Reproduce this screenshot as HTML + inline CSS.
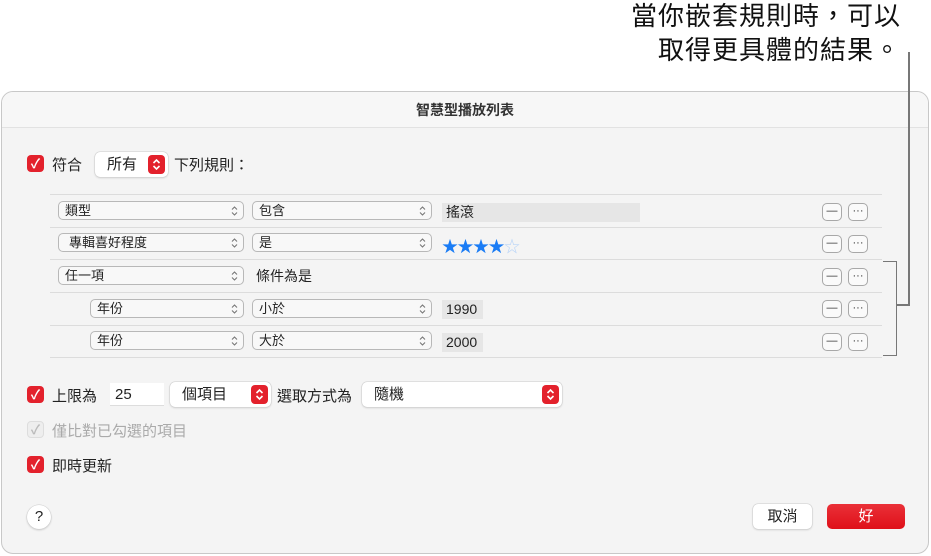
<!DOCTYPE html><html><head><meta charset="utf-8"><style>
*{box-sizing:border-box;margin:0;padding:0}
body{width:931px;height:556px;background:#fff;position:relative;overflow:hidden;font-family:"Liberation Sans","Noto Sans CJK TC",sans-serif;color:#222;font-size:14px}
.a{position:absolute}
.dlg{left:1px;top:91px;width:928px;height:463px;border:1px solid #c8c8c8;border-radius:12px;background:#f4f4f4;overflow:hidden}
.tb{left:0;top:0;width:100%;height:36px;background:#f7f7f7;border-bottom:1px solid #e2e2e2;text-align:center;line-height:36px;font-size:14px;font-weight:bold;color:#333}
.cb{width:17px;height:17px;border-radius:4px;background:#e3212c;color:#fff;font-size:13px;line-height:17px;text-align:center;font-weight:bold}
.pop{height:19px;border:1px solid #b8b8b8;border-radius:5px;background:#f8f8f8;font-size:13px;line-height:17px;padding-left:6px}
.ar{position:absolute;right:5px;top:3px;width:7px;height:12px}
.ln{left:50px;width:832px;height:1px;background:#dcdcdc}
.fld{background:#e6e6e6;height:19px;font-size:14px;line-height:19px;padding-left:4px}
.sb{width:20px;height:18px;border:1px solid #a8a8a8;border-radius:5px;background:#fafafa;text-align:center;font-size:11px;line-height:15px;color:#333}
.rp{height:25px;background:#fff;border-radius:5px;box-shadow:0 0 0 .5px #ccc,0 1px 2px rgba(0,0,0,.15);font-size:15px;line-height:25px;padding-left:12px}
.rs{position:absolute;right:3px;top:3px;width:17px;height:19px;border-radius:4px;background:#e3212c}
.rs svg{position:absolute;left:4px;top:3px}
</style></head><body>
<svg width="0" height="0" style="position:absolute"><defs>
<symbol id="g" viewBox="0 0 7 12"><path d="M1 4.5L3.5 2L6 4.5M1 7.5L3.5 10L6 7.5" fill="none" stroke="#777" stroke-width="1.1"/></symbol>
<symbol id="w" viewBox="0 0 9 13"><path d="M1.5 5L4.5 2L7.5 5M1.5 8L4.5 11L7.5 8" fill="none" stroke="#fff" stroke-width="1.6"/></symbol>
</defs></svg>
<div class="a" style="right:30px;top:-1px;font-size:26px;line-height:34px;text-align:right;color:#111;letter-spacing:1px">當你嵌套規則時，可以<br>取得更具體的結果。</div>
<div class="a dlg">
<div class="a tb">智慧型播放列表</div>
</div>
<div class="a" style="left:908px;top:52px;width:1.5px;height:254px;background:#777"></div>
<div class="a" style="left:883px;top:261px;width:14px;height:95px;border:1.5px solid #777;border-left:0"></div>
<div class="a" style="left:896px;top:304px;width:13px;height:1.5px;background:#777"></div>

<div class="a cb" style="left:27px;top:155px">✓</div>
<div class="a" style="left:52px;top:154px;font-size:15px">符合</div>
<div class="a rp" style="left:95px;top:152px;width:73px;line-height:25px">所有<div class="rs"><svg width="9" height="13"><use href="#w"/></svg></div></div>
<div class="a" style="left:174px;top:154px;font-size:15px">下列規則：</div>

<div class="a ln" style="top:194px"></div>
<div class="a ln" style="top:227px"></div>
<div class="a ln" style="top:259px"></div>
<div class="a ln" style="top:292px"></div>
<div class="a ln" style="top:325px"></div>
<div class="a ln" style="top:357px"></div>

<div class="a pop" style="left:58px;top:201px;width:186px">類型<svg class="ar"><use href="#g"/></svg></div>
<div class="a pop" style="left:252px;top:201px;width:180px">包含<svg class="ar"><use href="#g"/></svg></div>
<div class="a fld" style="left:442px;top:203px;width:198px">搖滾</div>

<div class="a pop" style="left:58px;top:233px;width:186px;padding-left:10px">專輯喜好程度<svg class="ar"><use href="#g"/></svg></div>
<div class="a pop" style="left:252px;top:233px;width:180px">是<svg class="ar"><use href="#g"/></svg></div>
<div class="a" style="left:442px;top:233px;font-size:16px;color:#1a7cf5;letter-spacing:-0.5px">★★★★<span style="color:#b8d4f8">☆</span></div>

<div class="a pop" style="left:58px;top:266px;width:186px">任一項<svg class="ar"><use href="#g"/></svg></div>
<div class="a" style="left:256px;top:266px;font-size:14px">條件為是</div>

<div class="a pop" style="left:90px;top:299px;width:154px">年份<svg class="ar"><use href="#g"/></svg></div>
<div class="a pop" style="left:252px;top:299px;width:180px">小於<svg class="ar"><use href="#g"/></svg></div>
<div class="a fld" style="left:442px;top:300px;width:41px">1990</div>

<div class="a pop" style="left:90px;top:331px;width:154px">年份<svg class="ar"><use href="#g"/></svg></div>
<div class="a pop" style="left:252px;top:331px;width:180px">大於<svg class="ar"><use href="#g"/></svg></div>
<div class="a fld" style="left:442px;top:333px;width:41px">2000</div>

<div class="a sb" style="left:822px;top:203px">—</div><div class="a sb" style="left:848px;top:203px">···</div>
<div class="a sb" style="left:822px;top:235px">—</div><div class="a sb" style="left:848px;top:235px">···</div>
<div class="a sb" style="left:822px;top:268px">—</div><div class="a sb" style="left:848px;top:268px">···</div>
<div class="a sb" style="left:822px;top:300px">—</div><div class="a sb" style="left:848px;top:300px">···</div>
<div class="a sb" style="left:822px;top:333px">—</div><div class="a sb" style="left:848px;top:333px">···</div>

<div class="a cb" style="left:27px;top:386px">✓</div>
<div class="a" style="left:52px;top:385px;font-size:15px">上限為</div>
<div class="a" style="left:110px;top:383px;width:54px;height:23px;background:#fff;border-bottom:1px solid #ddd;padding-left:5px;line-height:23px;font-size:15px">25</div>
<div class="a rp" style="left:170px;top:382px;width:101px">個項目<div class="rs"><svg width="9" height="13"><use href="#w"/></svg></div></div>
<div class="a" style="left:277px;top:385px;font-size:15px;white-space:nowrap">選取方式為</div>
<div class="a rp" style="left:362px;top:382px;width:200px">隨機<div class="rs"><svg width="9" height="13"><use href="#w"/></svg></div></div>

<div class="a cb" style="left:27px;top:421px;background:#eee;border:1px solid #ddd;color:#bbb;line-height:15px">✓</div>
<div class="a" style="left:52px;top:420px;font-size:15px;color:#aaa">僅比對已勾選的項目</div>
<div class="a cb" style="left:27px;top:456px">✓</div>
<div class="a" style="left:52px;top:455px;font-size:15px">即時更新</div>

<div class="a" style="left:27px;top:505px;width:24px;height:24px;border-radius:50%;background:#fff;box-shadow:0 0 0 .5px #ccc,0 1px 2px rgba(0,0,0,.2);text-align:center;line-height:24px;font-size:15px">?</div>
<div class="a" style="left:753px;top:504px;width:59px;height:25px;border-radius:5px;background:#fff;box-shadow:0 0 0 .5px #ccc,0 1px 2px rgba(0,0,0,.15);text-align:center;line-height:25px;font-size:15px">取消</div>
<div class="a" style="left:827px;top:504px;width:78px;height:25px;border-radius:5px;background:linear-gradient(#ea3038,#df1019);color:#fff;text-align:center;line-height:25px;font-size:15px">好</div>
</body></html>
